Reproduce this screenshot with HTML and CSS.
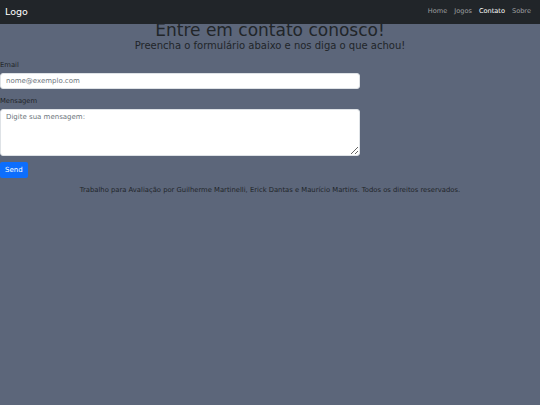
FILE: index.html
```html
<!DOCTYPE html>
<html lang="pt-BR">

<head>
    <meta charset="UTF-8" />
    <meta name="viewport" content="width=device-width, initial-scale=1.0" />
    <title>Contato</title>
    <link rel="stylesheet" href="styles.css">
</head>

<body>
    <header class="navbar">
        <a href="#" class="brand">Logo</a>
        <nav>
            <ul>
                <li><a href="#">Home</a></li>
                <li><a href="#">Jogos</a></li>
                <li><a href="#" class="active">Contato</a></li>
                <li><a href="#">Sobre</a></li>
            </ul>
        </nav>
    </header>

    <main>
        <h1 class="title">Entre em contato conosco!</h1>
        <p class="subtitle">Preencha o formulário abaixo e nos diga o que achou!</p>

        <form class="contact">
            <label for="email">Email</label>
            <input type="email" id="email" placeholder="nome@exemplo.com">
            <label for="msg">Mensagem</label>
            <textarea id="msg" placeholder="Digite sua mensagem:"></textarea>
            <button type="submit">Send</button>
        </form>
    </main>

    <footer>
        <p>Trabalho para Avaliação por Guilherme Martinelli, Erick Dantas e Maurício Martins. Todos os direitos reservados.</p>
    </footer>
</body>

</html>
```

FILE: styles.css
```css
html {
    font-family: "DejaVu Sans", sans-serif;
}

body {
    margin: 0;
    background-color: #5c667a;
    color: #212529;
    min-height: 405px;
}

.navbar {
    position: relative;
    z-index: 1;
    height: 23px;
    background-color: #212529;
    display: flex;
    align-items: center;
    justify-content: space-between;
    padding: 0 9px 1px 5px;
}

.brand {
    color: #fff;
    text-decoration: none;
    font-size: 9.5px;
}

.navbar ul {
    list-style: none;
    margin: 0;
    padding: 0;
    display: flex;
    gap: 7px;
    font-size: 6.6px;
    line-height: 1;
}

.navbar li a {
    color: rgba(255, 255, 255, 0.55);
    text-decoration: none;
}

.navbar li a.active {
    color: #fff;
}

.title {
    margin: -4px 0 0;
    text-align: center;
    font-weight: 400;
    font-size: 17px;
    line-height: 1.2;
}

.subtitle {
    margin: 0;
    text-align: center;
    font-size: 10px;
    line-height: 1.2;
}

.contact {
    width: 360px;
    display: flex;
    flex-direction: column;
    margin-top: 9px;
}

.contact label {
    font-size: 6.8px;
    margin-bottom: 4px;
}

.contact input,
.contact textarea {
    box-sizing: border-box;
    width: 360px;
    border: 1px solid #dee2e6;
    border-radius: 3px;
    background: #fff;
    font-family: "DejaVu Sans", sans-serif;
    font-size: 7px;
    padding: 3px 5px;
    color: #212529;
}

.contact input {
    height: 16px;
    margin-bottom: 8px;
}

.contact textarea {
    height: 47px;
    margin-bottom: 6px;
    resize: vertical;
}

.contact ::placeholder {
    color: #6c757d;
}

.contact button {
    align-self: flex-start;
    background-color: #0d6efd;
    color: #fff;
    border: none;
    border-radius: 2px;
    font-family: "DejaVu Sans", sans-serif;
    font-size: 7px;
    height: 16px;
    padding: 0 5px;
}

footer p {
    margin: 8px 0 0;
    text-align: center;
    font-size: 6.8px;
}
```
